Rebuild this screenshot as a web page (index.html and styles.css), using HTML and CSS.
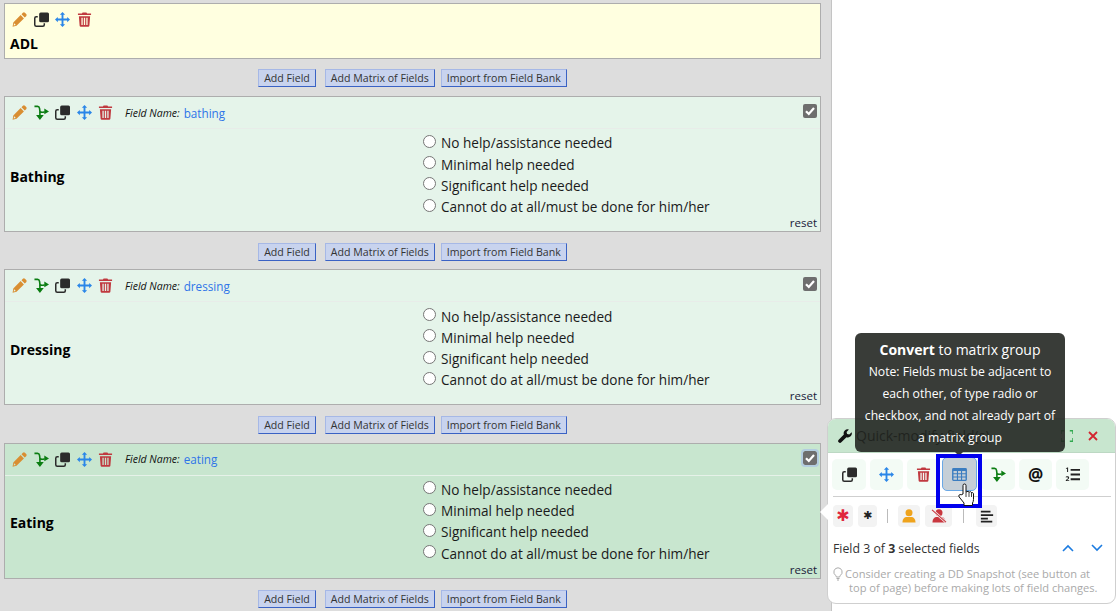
FILE: index.html
```html
<!DOCTYPE html>
<html lang="en">
<head>
<meta charset="utf-8">
<title>Online Designer</title>
<link rel="stylesheet" href="styles.css">
</head>
<body>
<svg class="defs" aria-hidden="true">
  <symbol id="i-pencil" viewBox="0 0 16 16"><path d="M11.6.9a1.6 1.6 0 0 1 2.2 0l1.3 1.3a1.6 1.6 0 0 1 0 2.2l-1.500 1.500-3.500-3.500zM9.200 3.300l3.500 3.500-7.900 7.900-4.200 1 .8-4.400zM2.300 12l-.6 2.400 2.400-.6z" fill="currentColor"/></symbol>
  <symbol id="i-clone" viewBox="0 0 16 16"><rect x="5.500" y="0.500" width="10.500" height="10.500" rx="1.600" fill="currentColor"/><path d="M4 5H2.400A1.600 1.600 0 0 0 .8 6.600v7a1.600 1.600 0 0 0 1.600 1.600h7a1.600 1.600 0 0 0 1.600-1.600V12" fill="none" stroke="currentColor" stroke-width="1.600"/></symbol>
  <symbol id="i-move" viewBox="0 0 16 16"><path d="M8 0l2.800 3H9v4h4V5.200L16 8l-3 2.800V9H9v4h1.800L8 16l-2.800-3H7V9H3v1.800L0 8l3-2.800V7h4V3H5.200z" fill="currentColor"/></symbol>
  <symbol id="i-trash" viewBox="0 0 14 16"><path d="M5 .4h4l.8 1.300H14v1.600H0V1.700h4.200zM1 4.400h12l-.8 10.200a1.300 1.300 0 0 1-1.300 1.200H3.100a1.300 1.300 0 0 1-1.300-1.200zM3.700 6.200v7.700h1.400V6.200zm2.600 0v7.700h1.400V6.200zm2.600 0v7.700h1.400V6.200z" fill="currentColor" fill-rule="evenodd"/></symbol>
  <symbol id="i-branch" viewBox="0 0 16 16"><path d="M.5 1.500h3.300c1.300 0 1.900.7 2.100 2l.5 3.700c1.500.8 3.200.6 5-.1" fill="none" stroke="currentColor" stroke-width="1.700"/><path d="M6.300 6.800v5" fill="none" stroke="currentColor" stroke-width="1.700"/><path d="M11 3.700L16 6.800l-5 3.100zM2.200 10.600h8.200L6.300 16z" fill="currentColor"/></symbol>
  <symbol id="i-wrench" viewBox="0 0 16 16"><path d="M15.600 3.700l-2.700 2.700-2.500-.6-.6-2.500L12.500.6a4.500 4.500 0 0 0-5.800 5.700L.8 12.200a2.100 2.100 0 0 0 3 3l5.900-5.900a4.500 4.500 0 0 0 5.900-5.600z" fill="currentColor"/></symbol>
  <symbol id="i-grid" viewBox="0 0 16 14"><path d="M1.500 0h13A1.500 1.500 0 0 1 16 1.500v11a1.500 1.500 0 0 1-1.500 1.500h-13A1.500 1.500 0 0 1 0 12.500v-11A1.500 1.500 0 0 1 1.500 0zM1.500 3.200v2.400h3.700V3.200zm4.900 0v2.400h3.200V3.200zm4.400 0v2.400h3.700V3.200zM1.500 6.700v2.400h3.700V6.700zm4.900 0v2.400h3.200V6.700zm4.400 0v2.400h3.700V6.700zM1.500 10.200v2.400h3.700v-2.400zm4.900 0v2.400h3.200v-2.400zm4.400 0v2.400h3.700v-2.400z" fill="currentColor" fill-rule="evenodd"/></symbol>
  <symbol id="i-list" viewBox="0 0 16 16"><path d="M6 2h10v2H6zM6 7h10v2H6zM6 12h10v2H6z" fill="currentColor"/><path d="M1 1.200l1.500-.8h.8v4.800H2.200V1.700l-1.200.5zM.7 14.800c0-1.800 2.500-2.200 2.500-3.200 0-.9-1.400-.8-2.300-.2v-1c1.300-.7 3.500-.6 3.500 1.100 0 1.500-1.900 1.900-2.300 2.500h2.400v.8z" fill="currentColor"/></symbol>
  <symbol id="i-person" viewBox="0 0 16 16"><circle cx="8" cy="4.200" r="4" fill="currentColor"/><path d="M.5 15.500c0-4.200 2.400-6.300 4.500-6.300h6c2.100 0 4.500 2.100 4.500 6.300z" fill="currentColor"/></symbol>
  <symbol id="i-align" viewBox="0 0 16 16"><path d="M1 2h11v2H1zM1 6h14v2H1zM1 10h8v2H1zM1 13.500h13v1.800H1z" fill="currentColor"/></symbol>
</svg>

<main class="designer">
  <section class="field field-header">
    <div class="tools">
      <svg class="icon pencil"><use href="#i-pencil"/></svg>
      <svg class="icon clone"><use href="#i-clone"/></svg>
      <svg class="icon move"><use href="#i-move"/></svg>
      <svg class="icon trash"><use href="#i-trash"/></svg>
    </div>
    <div class="header-title">ADL</div>
  </section>
  <div class="add-row"><button class="add-btn">Add Field</button><button class="add-btn">Add Matrix of Fields</button><button class="add-btn">Import from Field Bank</button></div>

  <section class="field">
    <div class="field-bar">
      <svg class="icon pencil"><use href="#i-pencil"/></svg>
      <svg class="icon branch"><use href="#i-branch"/></svg>
      <svg class="icon clone"><use href="#i-clone"/></svg>
      <svg class="icon move"><use href="#i-move"/></svg>
      <svg class="icon trash"><use href="#i-trash"/></svg>
      <span class="name-label">Field Name:</span><span class="name-value">bathing</span>
      <span class="check"><svg viewBox="0 0 10 10"><path d="M1 5.200l2.800 2.800 5.200-6" fill="none" stroke="#fff" stroke-width="2.200"/></svg></span>
    </div>
    <div class="field-body">
      <div class="field-label">Bathing</div>
      <div class="choices">
        <label class="choice"><span class="radio"></span>No help/assistance needed</label>
        <label class="choice"><span class="radio"></span>Minimal help needed</label>
        <label class="choice"><span class="radio"></span>Significant help needed</label>
        <label class="choice"><span class="radio"></span>Cannot do at all/must be done for him/her</label>
      </div>
      <span class="reset">reset</span>
    </div>
  </section>
  <div class="add-row"><button class="add-btn">Add Field</button><button class="add-btn">Add Matrix of Fields</button><button class="add-btn">Import from Field Bank</button></div>

  <section class="field">
    <div class="field-bar">
      <svg class="icon pencil"><use href="#i-pencil"/></svg>
      <svg class="icon branch"><use href="#i-branch"/></svg>
      <svg class="icon clone"><use href="#i-clone"/></svg>
      <svg class="icon move"><use href="#i-move"/></svg>
      <svg class="icon trash"><use href="#i-trash"/></svg>
      <span class="name-label">Field Name:</span><span class="name-value">dressing</span>
      <span class="check"><svg viewBox="0 0 10 10"><path d="M1 5.200l2.800 2.800 5.200-6" fill="none" stroke="#fff" stroke-width="2.200"/></svg></span>
    </div>
    <div class="field-body">
      <div class="field-label">Dressing</div>
      <div class="choices">
        <label class="choice"><span class="radio"></span>No help/assistance needed</label>
        <label class="choice"><span class="radio"></span>Minimal help needed</label>
        <label class="choice"><span class="radio"></span>Significant help needed</label>
        <label class="choice"><span class="radio"></span>Cannot do at all/must be done for him/her</label>
      </div>
      <span class="reset">reset</span>
    </div>
  </section>
  <div class="add-row"><button class="add-btn">Add Field</button><button class="add-btn">Add Matrix of Fields</button><button class="add-btn">Import from Field Bank</button></div>

  <section class="field field-selected">
    <div class="field-bar">
      <svg class="icon pencil"><use href="#i-pencil"/></svg>
      <svg class="icon branch"><use href="#i-branch"/></svg>
      <svg class="icon clone"><use href="#i-clone"/></svg>
      <svg class="icon move"><use href="#i-move"/></svg>
      <svg class="icon trash"><use href="#i-trash"/></svg>
      <span class="name-label">Field Name:</span><span class="name-value">eating</span>
      <span class="check check-focus"><svg viewBox="0 0 10 10"><path d="M1 5.200l2.800 2.800 5.200-6" fill="none" stroke="#fff" stroke-width="2.200"/></svg></span>
    </div>
    <div class="field-body">
      <div class="field-label">Eating</div>
      <div class="choices">
        <label class="choice"><span class="radio"></span>No help/assistance needed</label>
        <label class="choice"><span class="radio"></span>Minimal help needed</label>
        <label class="choice"><span class="radio"></span>Significant help needed</label>
        <label class="choice"><span class="radio"></span>Cannot do at all/must be done for him/her</label>
      </div>
      <span class="reset">reset</span>
    </div>
  </section>
  <div class="add-row add-row-last"><button class="add-btn">Add Field</button><button class="add-btn">Add Matrix of Fields</button><button class="add-btn">Import from Field Bank</button></div>
</main>

<aside class="quick">
  <span class="quick-caret"></span>
  <header class="quick-head">
    <svg class="qh-wrench"><use href="#i-wrench"/></svg>
    <span class="qh-title">Quick-modify field(s)</span>
    <svg class="qh-expand" viewBox="0 0 12 12"><path d="M0 4V.8h3.200M8.800.8H12V4M12 8v3.200H8.800M3.200 11.200H0V8" fill="none" stroke="#2fa84f" stroke-width="1.500"/></svg>
    <svg class="qh-close" viewBox="0 0 10 10"><path d="M1 1l8 8M9 1l-8 8" stroke="#d3252f" stroke-width="1.800"/></svg>
  </header>
  <div class="q-row">
    <span class="q-btn"><svg class="qi clone"><use href="#i-clone"/></svg></span>
    <span class="q-btn q-w2"><svg class="qi move"><use href="#i-move"/></svg></span>
    <span class="q-btn q-w2"><svg class="qi trash"><use href="#i-trash"/></svg></span>
    <span class="q-btn q-hover"><svg class="qi grid"><use href="#i-grid"/></svg></span>
    <span class="q-btn"><svg class="qi branch"><use href="#i-branch"/></svg></span>
    <span class="q-btn q-w2 q-at">@</span>
    <span class="q-btn q-w2"><svg class="qi list"><use href="#i-list"/></svg></span>
  </div>
  <div class="q-rule"></div>
  <div class="q-row2">
    <span class="s-btn s-req">✱</span>
    <span class="s-btn s-opt">✱</span>
    <span class="s-sep"></span>
    <span class="s-btn s-id"><svg class="si"><use href="#i-person"/></svg></span>
    <span class="s-btn s-noid"><svg class="si" viewBox="0 0 20 16"><use href="#i-person" x="2" width="16" height="16"/><path d="M2 1l16 14" stroke="#f4f4f4" stroke-width="3"/><path d="M2 1l16 14" stroke="#c9373f" stroke-width="1.300"/></svg></span>
    <span class="s-sep s-sep2"></span>
    <span class="s-btn s-al"><svg class="si"><use href="#i-align"/></svg></span>
  </div>
  <div class="q-count">
    <span class="q-count-text">Field 3 of <b>3</b> selected fields</span>
    <svg class="chev" viewBox="0 0 12 8"><path d="M1 7l5-5 5 5" fill="none" stroke="#1b7be0" stroke-width="1.600"/></svg>
    <svg class="chev" viewBox="0 0 12 8"><path d="M1 1l5 5 5-5" fill="none" stroke="#1b7be0" stroke-width="1.600"/></svg>
  </div>
  <p class="q-tip"><svg class="bulb" viewBox="0 0 10 14"><path d="M5 .8a4.200 4.200 0 0 0-2.400 7.600c.5.400.6 1 .7 1.600h3.400c.1-.6.2-1.200.7-1.600A4.200 4.200 0 0 0 5 .8zM3.500 11.500h3M4 13h2" fill="none" stroke="#aaa" stroke-width="1"/></svg>Consider creating a DD Snapshot (see button at<br><span class="tip-indent">top of page) before making lots of field changes.</span></p>
</aside>

<div class="tooltip">
  <div class="tip-title"><b>Convert</b> to matrix group</div>
  <div class="tip-note">Note: Fields must be adjacent to each other, of type radio or checkbox, and not already part of a matrix group</div>
  <span class="tip-arrow"></span>
</div>
<div class="highlight"></div>
<svg class="cursor" viewBox="0 0 17 24"><path d="M5 11V2.500a1.500 1.500 0 0 1 3 0V9l1-.3a1.300 1.300 0 0 1 2 .4l.6-.1a1.300 1.300 0 0 1 1.900.5c1-.2 2 .4 2 1.500v5.500c0 1.500-.5 2.600-1 3.500v2.500H6v-2.500L1.200 14c-1.200-1.500.5-3.200 2-2.200z" fill="#fff" stroke="#111" stroke-width="1"/><path d="M8 9v5M11 9.100V14M13.500 9.500V14" stroke="#111" stroke-width=".8"/></svg>
</body>
</html>
```

FILE: styles.css
```css
* { box-sizing: border-box; }
html, body { margin: 0; height: 100%; }
body {
  width: 1118px;
  height: 611px;
  overflow: hidden;
  position: relative;
  background: #fff;
  font-family: "Open Sans", sans-serif;
  color: #000;
}
.defs { position: absolute; width: 0; height: 0; }

.designer {
  width: 832px;
  height: 611px;
  background: #ddd;
  border-right: 1px solid #c4c4c4;
  padding: 3px 10px 0 4px;
}

.field {
  width: 817px;
  height: 136px;
  background: #e5f4ea;
  border: 1px solid #adadad;
}
.field-selected { background: #c8e6cf; }
.field-header {
  height: 56px;
  background: #ffffe0;
}
.tools {
  display: flex;
  align-items: center;
  gap: 6.500px;
  height: 30px;
  padding: 0 0 0 7px;
}
.header-title {
  font-size: 14px;
  font-weight: 700;
  line-height: 20px;
  padding: 0 0 0 5px;
}

.icon { width: 15px; height: 15px; display: block; flex: none; }
.pencil { color: #d98e32; }
.clone { color: #2b2b2b; }
.move { color: #2a86e8; }
.trash { color: #c0393f; }
.branch { color: #0b7d12; }

.add-row {
  display: flex;
  justify-content: center;
  gap: 6px;
  width: 817px;
  height: 37.200px;
  padding: 10.450px 0 0 0;
}
.add-row-last { padding-top: 11px; }
.add-btn {
  height: 18px;
  padding: 0 5px;
  background: #c8d3ee;
  border: 1px solid #3a62c4;
  border-top-color: #a6b8e6;
  border-left-color: #a6b8e6;
  font: 10.600px/16px "Open Sans", sans-serif;
  color: #333;
}
.add-btn:first-child { margin-right: 3px; }

.field-bar {
  position: relative;
  display: flex;
  align-items: center;
  gap: 6.500px;
  height: 32px;
  padding-left: 7px;
  border-bottom: 1px solid #e8ece9;
}
.field-selected .field-bar { border-bottom-color: #e6f2e9; }
.name-label {
  font-size: 10.500px;
  font-style: italic;
  color: #111;
  margin-left: 5.500px;
}
.name-value {
  font-size: 11.700px;
  color: #2f75e8;
  margin-left: -2.500px;
}
.check {
  position: absolute;
  right: 3px;
  top: 7px;
  width: 14px;
  height: 14px;
  border-radius: 2px;
  background: #6e6e6e;
  display: flex;
  padding: 2px;
}
.check svg { width: 100%; height: 100%; }
.check-focus { outline: 2px solid #b3cde0; }

.field-body {
  position: relative;
  display: flex;
  height: 102px;
}
.field-label {
  width: 412px;
  padding-left: 5px;
  align-self: center;
  font-size: 14px;
  font-weight: 700;
  line-height: 20px;
  margin-top: -7px;
}
.choices { padding: 3px 0 0 6px; }
.choice {
  display: flex;
  align-items: center;
  height: 21.300px;
  font-size: 13.600px;
  color: #1a1a1a;
}
.radio {
  width: 13px;
  height: 13px;
  margin: -3px 5px 0 0;
  border: 1px solid #767676;
  border-radius: 50%;
  background: #fff;
  flex: none;
}
.reset {
  position: absolute;
  right: 3px;
  bottom: 1px;
  font-size: 11.500px;
  line-height: 14px;
  color: #1a1a3a;
}

.quick {
  position: absolute;
  left: 827px;
  top: 418px;
  width: 289px;
  height: 186px;
  background: #fff;
  border: 1px solid #cfcfcf;
  border-radius: 9px;
}
.quick-caret {
  position: absolute;
  left: -8px;
  top: 85px;
  width: 0;
  height: 0;
  border-style: solid;
  border-width: 8px 8px 8px 0;
  border-color: transparent #fff transparent transparent;
}
.quick-head {
  position: relative;
  display: flex;
  align-items: center;
  height: 34px;
  padding-left: 10px;
  background: #c8e6cf;
  border-radius: 8px 8px 0 0;
  border-bottom: 1px solid #bcd8c3;
}
.qh-wrench { width: 14px; height: 14px; color: #111; flex: none; }
.qh-title { font-size: 14px; color: #000; margin-left: 4px; }
.qh-expand { position: absolute; left: 233px; top: 11px; width: 12px; height: 12px; }
.qh-close { position: absolute; left: 260px; top: 12px; width: 10px; height: 10px; }

.q-row {
  display: flex;
  align-items: center;
  gap: 4px;
  margin-top: 5px;
  height: 32px;
  padding-left: 4px;
}
.q-btn {
  display: flex;
  align-items: center;
  justify-content: center;
  width: 34px;
  height: 31px;
  background: #f3fbf5;
  border-radius: 5px;
}
.q-w2 { width: 33px; }
.q-hover {
  width: 35px;
  height: 34px;
  margin-left: -2px;
  background: #c5cfd7;
  border: 1px solid #69a8e6;
}
.qi { width: 15px; height: 15px; display: block; }
.qi.grid { color: #3b7dc0; height: 13px; }
.qi.list { color: #222; }
.q-at { font-size: 17px; font-weight: 700; color: #111; }
.q-rule {
  height: 1px;
  margin: 6px 4px 0 5px;
  background: #cfcfcf;
}
.q-row2 {
  display: flex;
  align-items: center;
  gap: 5px;
  margin: 8px 0 0 5px;
  height: 22px;
}
.s-btn {
  display: flex;
  align-items: center;
  justify-content: center;
  height: 22px;
  width: 20px;
  background: #f3f3f3;
  border-radius: 4px;
}
.s-req { color: #e0263c; font-family: "DejaVu Sans", sans-serif; font-size: 16px; line-height: 22px; }
.s-opt { color: #222; width: 19px; font-family: "DejaVu Sans", sans-serif; font-size: 11px; line-height: 22px; }
.s-sep { width: 1px; height: 14px; background: #bbb; margin: 0 5px; }
.s-id { width: 22px; color: #efa31c; }
.s-noid { width: 27px; color: #c9373f; }
.s-al { width: 21px; color: #222; margin-left: 1px; }
.si { width: 14px; height: 14px; display: block; }
.s-noid .si { width: 18px; height: 14px; }
.s-sep2 { margin: 0 6px; }

.q-count {
  display: flex;
  align-items: center;
  height: 18px;
  margin: 12px 0 0 5px;
  font-size: 12.300px;
  color: #333;
}
.q-count-text { flex: none; width: 229px; white-space: nowrap; }
.chev { width: 12px; height: 8px; margin-right: 17px; flex: none; }
.q-tip {
  margin: 10px 0 0 5px;
  font-size: 11.100px;
  line-height: 13.500px;
  color: #a9a9a9;
  white-space: nowrap;
}
.bulb { width: 10px; height: 14px; margin-right: 2px; vertical-align: -3px; }
.tip-indent { padding-left: 16px; }

.tooltip {
  position: absolute;
  left: 855px;
  top: 333px;
  width: 210px;
  height: 119px;
  padding: 7px 8px 0;
  background: rgba(36, 39, 34, 0.9);
  border-radius: 6px;
  color: #fff;
  text-align: center;
}
.tip-title { font-size: 14px; line-height: 20px; }
.tip-note { font-size: 12.200px; line-height: 22px; padding-top: 1px; }
.tip-arrow {
  position: absolute;
  left: 100px;
  bottom: -4px;
  width: 0;
  height: 0;
  border-style: solid;
  border-width: 4px 4px 0 4px;
  border-color: #3a3d38 transparent transparent transparent;
}
.highlight {
  position: absolute;
  left: 936px;
  top: 454px;
  width: 46px;
  height: 54px;
  border: 4px solid #0000ee;
}
.cursor {
  position: absolute;
  left: 958px;
  top: 483px;
  width: 17px;
  height: 24px;
}
```
